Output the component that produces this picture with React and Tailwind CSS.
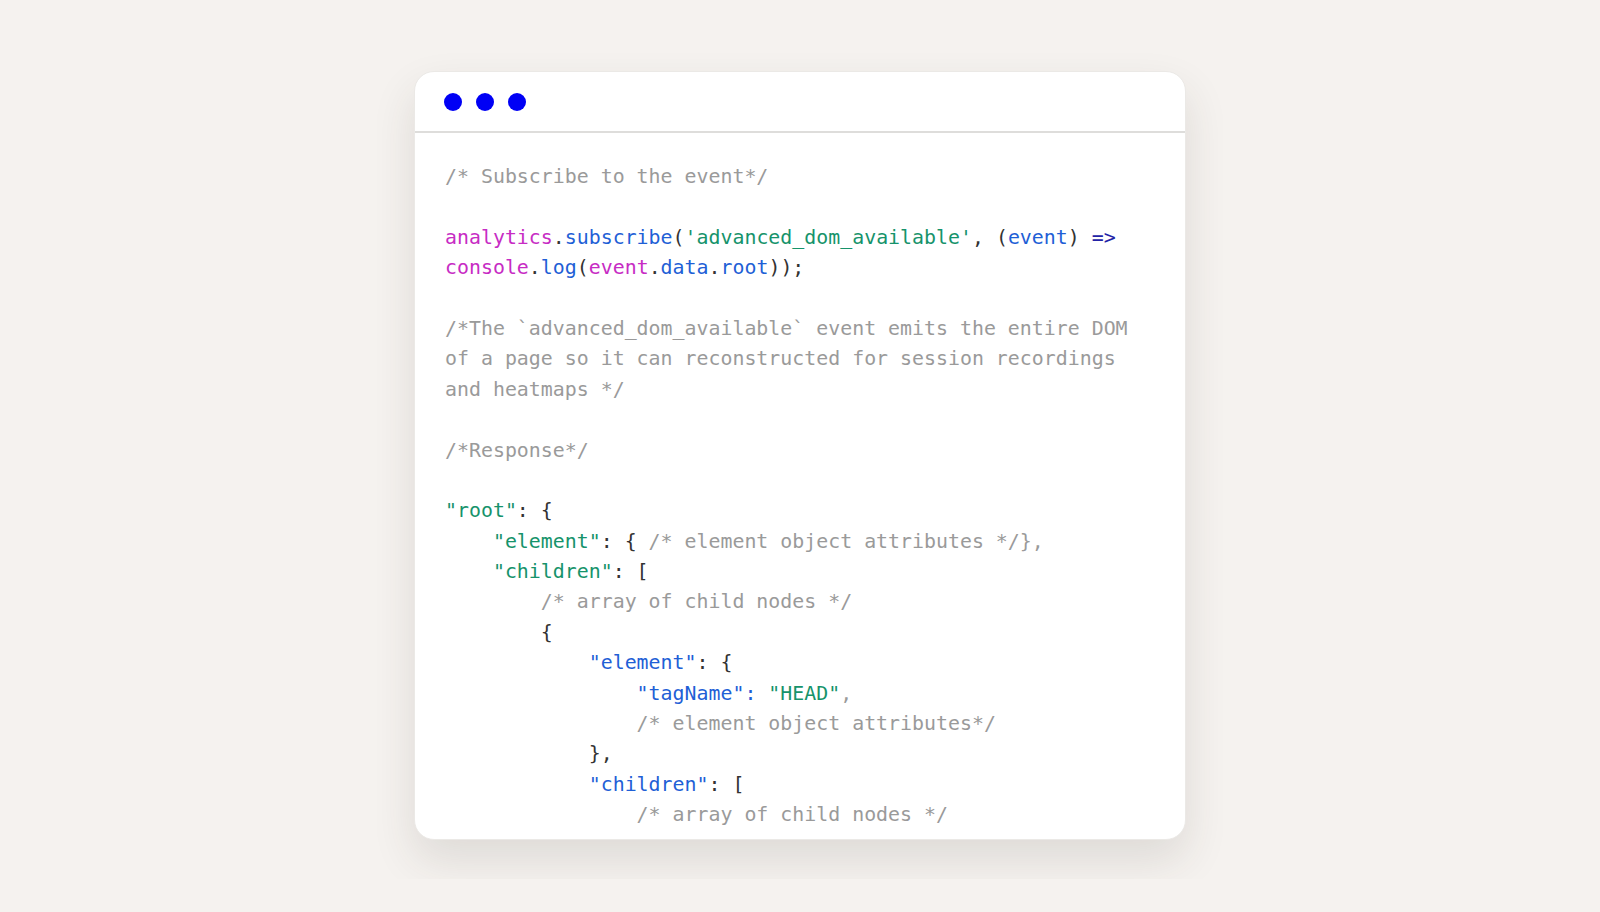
const C = {
  c: 'text-[#9a9a9a]',
  m: 'text-[#c72cc4]',
  b: 'text-[#1f5fd6]',
  g: 'text-[#16936b]',
  d: 'text-[#333333]',
  n: 'text-[#2323a6]',
}

// each line is a list of [colorKey, text]
const lines = [
  [['c', '/* Subscribe to the event*/']],
  [],
  [
    ['m', 'analytics'], ['d', '.'], ['b', 'subscribe'], ['d', '('],
    ['g', "'advanced_dom_available'"], ['d', ', ('], ['b', 'event'], ['d', ') '], ['n', '=>'],
  ],
  [
    ['m', 'console'], ['d', '.'], ['b', 'log'], ['d', '('], ['m', 'event'], ['d', '.'],
    ['b', 'data'], ['d', '.'], ['b', 'root'], ['d', '));'],
  ],
  [],
  [['c', '/*The `advanced_dom_available` event emits the entire DOM']],
  [['c', 'of a page so it can reconstructed for session recordings']],
  [['c', 'and heatmaps */']],
  [],
  [['c', '/*Response*/']],
  [],
  [['g', '"root"'], ['d', ': {']],
  [['d', '    '], ['g', '"element"'], ['d', ': { '], ['c', '/* element object attributes */},']],
  [['d', '    '], ['g', '"children"'], ['d', ': [']],
  [['c', '        /* array of child nodes */']],
  [['d', '        {']],
  [['d', '            '], ['b', '"element"'], ['d', ': {']],
  [['d', '                '], ['b', '"tagName":'], ['d', ' '], ['g', '"HEAD"'], ['c', ',']],
  [['c', '                /* element object attributes*/']],
  [['d', '            },']],
  [['d', '            '], ['b', '"children"'], ['d', ': [']],
  [['c', '                /* array of child nodes */']],
]

export default function App() {
  return (
    <div className="w-[1600px] h-[912px] bg-[#f5f2ef] overflow-hidden">
      <div className="ml-[377px] mt-[31px] w-[846px] h-[848px] p-[37px] pt-[40px] overflow-hidden">
        <div className="w-[772px] h-[769px] bg-white rounded-[20px] overflow-hidden shadow-[0_20px_44px_rgba(60,50,40,0.12)] border border-[#ebe9e6]">
          <div className="h-[61px] flex items-center gap-[14px] pl-[29px] pt-[1px] border-b-2 border-[#dedddb]">
            <span className="w-[18px] h-[18px] rounded-full bg-[#0000f5]" />
            <span className="w-[18px] h-[18px] rounded-full bg-[#0000f5]" />
            <span className="w-[18px] h-[18px] rounded-full bg-[#0000f5]" />
          </div>
          <pre className="pl-[30px] pt-[29px] text-[19.9px] leading-[30.4px] font-['DejaVu_Sans_Mono',monospace] whitespace-pre">
            {lines.map((line, i) => (
              <div key={`line-${i}`} className="h-[30.4px]">
                {line.map(([k, t], j) => (
                  <span key={`tok-${i}-${j}`} className={C[k]}>
                    {t}
                  </span>
                ))}
              </div>
            ))}
          </pre>
        </div>
      </div>
    </div>
  )
}
